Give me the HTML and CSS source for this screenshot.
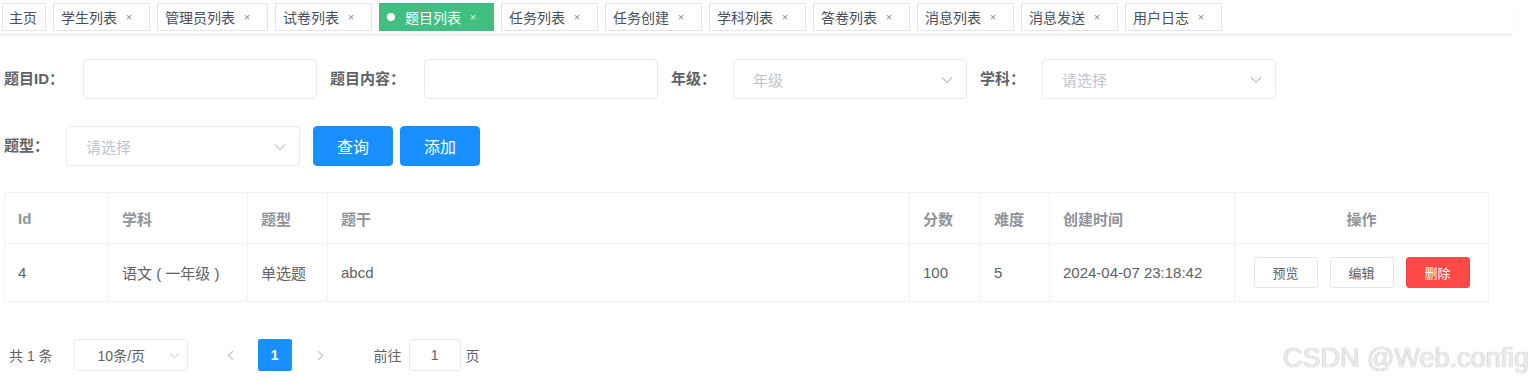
FILE: index.html
```html
<!DOCTYPE html>
<html lang="zh-CN">
<head>
  <meta charset="UTF-8" />
  <title>题目列表</title>
  <link rel="stylesheet" href="styles.css">
</head>
<body>
  <div class="app">
    <div class="tags-bar">
      <span class="tag tag-home">主页</span>
      <span class="tag">学生列表<i class="close">×</i></span>
      <span class="tag">管理员列表<i class="close">×</i></span>
      <span class="tag">试卷列表<i class="close">×</i></span>
      <span class="tag active"><b class="dot"></b>题目列表<i class="close">×</i></span>
      <span class="tag">任务列表<i class="close">×</i></span>
      <span class="tag">任务创建<i class="close">×</i></span>
      <span class="tag">学科列表<i class="close">×</i></span>
      <span class="tag">答卷列表<i class="close">×</i></span>
      <span class="tag">消息列表<i class="close">×</i></span>
      <span class="tag">消息发送<i class="close">×</i></span>
      <span class="tag">用户日志<i class="close">×</i></span>
    </div>

    <div class="content">
      <div class="search-form">
        <div class="form-row first">
          <div class="form-item">
            <label>题目ID：</label>
            <div class="input"></div>
          </div>
          <div class="form-item">
            <label>题目内容：</label>
            <div class="input"></div>
          </div>
          <div class="form-item">
            <label class="short">年级：</label>
            <div class="input select">
              <span class="placeholder">年级</span>
              <svg class="arrow" width="12" height="8" viewBox="0 0 12 8"><path d="M1 1.5 L6 6.5 L11 1.5" fill="none" stroke="#c0c4cc" stroke-width="1.1"/></svg>
            </div>
          </div>
          <div class="form-item">
            <label class="short">学科：</label>
            <div class="input select">
              <span class="placeholder">请选择</span>
              <svg class="arrow" width="12" height="8" viewBox="0 0 12 8"><path d="M1 1.5 L6 6.5 L11 1.5" fill="none" stroke="#c0c4cc" stroke-width="1.1"/></svg>
            </div>
          </div>
        </div>
        <div class="form-row">
          <div class="form-item">
            <label class="short">题型：</label>
            <div class="input select">
              <span class="placeholder">请选择</span>
              <svg class="arrow" width="12" height="8" viewBox="0 0 12 8"><path d="M1 1.5 L6 6.5 L11 1.5" fill="none" stroke="#c0c4cc" stroke-width="1.1"/></svg>
            </div>
          </div>
          <div class="btn-group">
            <button class="btn primary">查询</button>
            <button class="btn primary">添加</button>
          </div>
        </div>
      </div>

      <table class="data-table">
        <colgroup>
          <col style="width:104px">
          <col style="width:139px">
          <col style="width:80px">
          <col style="width:582px">
          <col style="width:71px">
          <col style="width:69px">
          <col style="width:185px">
          <col style="width:254px">
        </colgroup>
        <thead>
          <tr>
            <th>Id</th>
            <th>学科</th>
            <th>题型</th>
            <th>题干</th>
            <th>分数</th>
            <th>难度</th>
            <th>创建时间</th>
            <th class="center">操作</th>
          </tr>
        </thead>
        <tbody>
          <tr>
            <td>4</td>
            <td>语文 ( 一年级 )</td>
            <td>单选题</td>
            <td>abcd</td>
            <td>100</td>
            <td>5</td>
            <td>2024-04-07 23:18:42</td>
            <td class="center">
              <div class="ops">
                <button class="btn small">预览</button>
                <button class="btn small">编辑</button>
                <button class="btn small danger">删除</button>
              </div>
            </td>
          </tr>
        </tbody>
      </table>

      <div class="pagination">
        <span class="total">共 1 条</span>
        <div class="size-select">
          <span>10条/页</span>
          <svg class="arrow" width="11" height="7" viewBox="0 0 12 8"><path d="M1 1.5 L6 6.5 L11 1.5" fill="none" stroke="#c0c4cc" stroke-width="1.1"/></svg>
        </div>
        <span class="pager-btn prev">
          <svg width="7" height="11" viewBox="0 0 7 11"><path d="M6 1 L1.5 5.5 L6 10" fill="none" stroke="#c0c4cc" stroke-width="1.2"/></svg>
        </span>
        <span class="page current">1</span>
        <span class="pager-btn next">
          <svg width="7" height="11" viewBox="0 0 7 11"><path d="M1 1 L5.5 5.5 L1 10" fill="none" stroke="#c0c4cc" stroke-width="1.2"/></svg>
        </span>
        <span class="jump">前往</span>
        <div class="jump-input">1</div>
        <span class="jump-unit">页</span>
      </div>
    </div>

    <div class="watermark">CSDN @Web.config</div>
  </div>
</body>
</html>
```

FILE: styles.css
```css
body {
  margin: 0;
  background: #fff;
  font-family: "Liberation Sans", "Noto Sans CJK SC", sans-serif;
  color: #606266;
}

.app {
  position: relative;
  width: 1537px;
  height: 390px;
  overflow: hidden;
}

/* tags view */
.tags-bar {
  width: 1512px;
  height: 35px;
  border-bottom: 1px solid #e4e7ed;
  box-shadow: 0 1px 2px 0 rgba(0, 0, 0, 0.06);
  display: flex;
  align-items: flex-start;
  gap: 7px;
  padding: 3px 0 0 2px;
  box-sizing: border-box;
}

.tag {
  display: flex;
  align-items: center;
  height: 28px;
  box-sizing: border-box;
  border: 1px solid #e1e4ea;
  background: #fff;
  color: #495060;
  font-size: 14px;
  padding: 0 14px 0 7px;
  white-space: nowrap;
}

.tag-home {
  padding: 0 8px 0 6px;
}

.tag .close {
  font-style: normal;
  width: 12px;
  margin-left: 6px;
  font-size: 11px;
  text-align: center;
  color: #8a8f99;
}

.tag.active {
  background: #40bf80;
  border-color: #40bf80;
  color: #fff;
}

.tag.active .close {
  color: #d8f3e6;
}

.dot {
  width: 8px;
  height: 8px;
  border-radius: 50%;
  background: #fff;
  margin-right: 10px;
}

.content {
  padding: 24px 0 0 4px;
}

/* search form */
.form-row {
  display: flex;
  align-items: center;
  gap: 13px;
}

.form-row.first {
  margin-bottom: 27px;
}

.form-item {
  display: flex;
  align-items: center;
}

.form-item label {
  font-size: 15px;
  font-weight: bold;
  color: #606266;
  padding-right: 19px;
  line-height: 40px;
}

.form-item label.short {
  padding-right: 17px;
}

.input {
  position: relative;
  width: 234px;
  height: 40px;
  box-sizing: border-box;
  border: 1px solid #e8eaee;
  border-radius: 4px;
  background: #fff;
  display: flex;
  align-items: center;
}

.placeholder {
  padding-left: 19px;
  font-size: 15px;
  color: #c0c4cc;
}

.select .arrow {
  position: absolute;
  right: 13px;
  top: 16px;
}

.btn-group {
  display: flex;
  gap: 7px;
}

.btn {
  font-family: inherit;
  border-radius: 4px;
  cursor: pointer;
  border: 1px solid #e3e6eb;
  background: #fff;
  color: #606266;
}

.btn.primary {
  width: 80px;
  height: 40px;
  font-size: 16px;
  background: #1890ff;
  border-color: #1890ff;
  color: #fff;
}

/* table */
.data-table {
  margin-top: 26px;
  width: 1484px;
  table-layout: fixed;
  border-collapse: collapse;
  border: 1px solid #f0f2f5;
}

.data-table th,
.data-table td {
  border: 1px solid #f0f2f5;
  padding: 0 13px;
  text-align: left;
  font-size: 15px;
  white-space: nowrap;
}

.data-table th {
  height: 50px;
  color: #909399;
  font-weight: bold;
}

.data-table td {
  height: 57px;
  color: #606266;
}

.data-table .center {
  text-align: center;
}

.ops {
  display: flex;
  justify-content: center;
  gap: 12px;
}

.btn.small {
  width: 64px;
  height: 31px;
  font-size: 13px;
  border-radius: 3px;
}

.btn.danger {
  background: #ff4949;
  border-color: #ff4949;
  color: #fff;
}

/* pagination */
.pagination {
  margin-top: 37px;
  display: flex;
  align-items: center;
  height: 32px;
  font-size: 14px;
  color: #606266;
}

.total {
  margin-left: 5px;
}

.size-select {
  position: relative;
  margin-left: 21px;
  width: 114px;
  height: 32px;
  box-sizing: border-box;
  border: 1px solid #e8eaee;
  border-radius: 3px;
  display: flex;
  align-items: center;
  padding-left: 23px;
}

.size-select .arrow {
  position: absolute;
  right: 7px;
  top: 12px;
}

.pager-btn {
  width: 30px;
  height: 32px;
  display: flex;
  align-items: center;
  justify-content: center;
}

.prev {
  margin-left: 28px;
}

.next {
  margin-left: 14px;
}

.page.current {
  margin-left: 12px;
  width: 34px;
  height: 32px;
  background: #1890ff;
  color: #fff;
  font-weight: bold;
  border-radius: 2px;
  display: flex;
  align-items: center;
  justify-content: center;
}

.jump {
  margin-left: 38px;
}

.jump-input {
  margin-left: 7px;
  width: 52px;
  height: 32px;
  box-sizing: border-box;
  border: 1px solid #e8eaee;
  border-radius: 3px;
  display: flex;
  align-items: center;
  justify-content: center;
}

.jump-unit {
  margin-left: 5px;
}

.watermark {
  position: absolute;
  left: 1283px;
  top: 343px;
  font-size: 27px;
  line-height: 30px;
  color: #ececec;
  text-shadow: 0 0 1px #999;
  white-space: nowrap;
}
```
